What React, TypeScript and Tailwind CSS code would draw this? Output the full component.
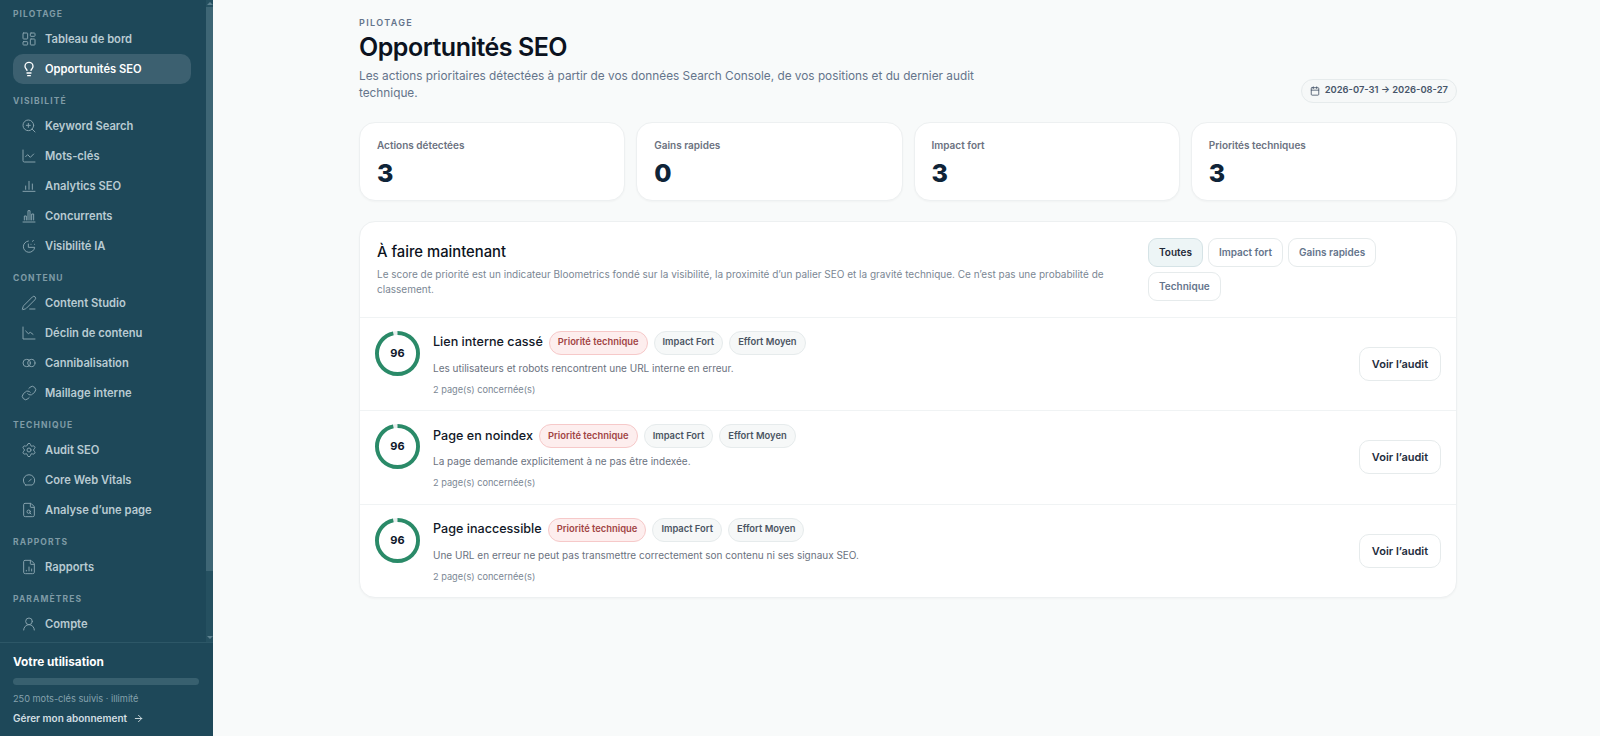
import {
  ArrowRight,
  Calendar,
  ChartLine,
  FileChartColumn,
  FileSearch,
  LayoutDashboard,
  Lightbulb,
  Link,
  PenLine,
  Settings,
  UserRound,
  ZoomIn,
} from 'lucide-react';
import type { ReactNode } from 'react';

function IconSvg({ children }: { children: ReactNode }) {
  return (
    <svg width="16" height="16" viewBox="0 0 24 24" fill="none" stroke="currentColor" strokeWidth="1.5" strokeLinecap="round" strokeLinejoin="round">
      {children}
    </svg>
  );
}

const barsIcon = (
  <IconSvg>
    <path d="M3 20h18M7 17v-5M12 17V5M17 17V9" />
  </IconSvg>
);

const competitorsIcon = (
  <IconSvg>
    <path d="M3 21h18M5 18v-6h3v6M10.5 18V4h3v14M16 18V9h3v9" />
  </IconSvg>
);

const aiIcon = (
  <IconSvg>
    <path d="M11 4.5a8.5 8.5 0 1 0 9.5 9.5H11V9" />
    <path d="M15 9.5h.01M17.5 5l1-1.5M20.5 9.5h.01" />
  </IconSvg>
);

const declineIcon = (
  <IconSvg>
    <path d="M3 3v18h18" />
    <path d="M7 9l4 4 3-2 4 3" />
  </IconSvg>
);

const circlesIcon = (
  <IconSvg>
    <circle cx="8.5" cy="12" r="5.5" />
    <circle cx="15.5" cy="12" r="5.5" />
  </IconSvg>
);

const vitalsIcon = (
  <IconSvg>
    <path d="M7 19.5h10a8.5 8.5 0 1 0-10 0z" />
    <path d="M12 14l3.5-3.5" />
  </IconSvg>
);

const sections = [
  {
    label: 'PILOTAGE',
    items: [
      { name: 'Tableau de bord', icon: <LayoutDashboard size={16} strokeWidth={1.5} /> },
      { name: 'Opportunités SEO', icon: <Lightbulb size={16} strokeWidth={2} />, active: true },
    ],
  },
  {
    label: 'VISIBILITÉ',
    items: [
      { name: 'Keyword Search', icon: <ZoomIn size={16} strokeWidth={1.5} /> },
      { name: 'Mots-clés', icon: <ChartLine size={16} strokeWidth={1.5} /> },
      { name: 'Analytics SEO', icon: barsIcon },
      { name: 'Concurrents', icon: competitorsIcon },
      { name: 'Visibilité IA', icon: aiIcon },
    ],
  },
  {
    label: 'CONTENU',
    items: [
      { name: 'Content Studio', icon: <PenLine size={16} strokeWidth={1.5} /> },
      { name: 'Déclin de contenu', icon: declineIcon },
      { name: 'Cannibalisation', icon: circlesIcon },
      { name: 'Maillage interne', icon: <Link size={16} strokeWidth={1.5} /> },
    ],
  },
  {
    label: 'TECHNIQUE',
    items: [
      { name: 'Audit SEO', icon: <Settings size={16} strokeWidth={1.5} /> },
      { name: 'Core Web Vitals', icon: vitalsIcon },
      { name: 'Analyse d’une page', icon: <FileSearch size={16} strokeWidth={1.5} /> },
    ],
  },
  {
    label: 'RAPPORTS',
    items: [{ name: 'Rapports', icon: <FileChartColumn size={16} strokeWidth={1.5} /> }],
  },
  {
    label: 'PARAMÈTRES',
    items: [{ name: 'Compte', icon: <UserRound size={16} strokeWidth={1.5} /> }],
  },
];

const stats = [
  { label: 'Actions détectées', value: '3' },
  { label: 'Gains rapides', value: '0' },
  { label: 'Impact fort', value: '3' },
  { label: 'Priorités techniques', value: '3' },
];

const opportunities = [
  { title: 'Lien interne cassé', text: 'Les utilisateurs et robots rencontrent une URL interne en erreur.' },
  { title: 'Page en noindex', text: 'La page demande explicitement à ne pas être indexée.' },
  { title: 'Page inaccessible', text: 'Une URL en erreur ne peut pas transmettre correctement son contenu ni ses signaux SEO.' },
];

function Sidebar() {
  return (
    <aside className="relative flex h-[736px] w-[213px] shrink-0 flex-col bg-[#1e4859]">
      <nav className="h-[642px] overflow-hidden pl-[13px] pr-[22px] pt-2">
        {sections.map((section, i) => (
          <div key={section.label} className={i > 0 ? 'mt-[11px]' : ''}>
            <div className="mb-[4px] flex h-[12px] items-center text-[8.5px] font-bold tracking-[0.13em] text-[#7f9ba6]">{section.label}</div>
            {section.items.map((item) => (
              <div
                key={item.name}
                className={`flex h-[30px] items-center gap-[8px] rounded-[10px] pl-[8px] text-[11.2px] font-semibold ${
                  item.active ? 'bg-[#3c6070] text-white' : 'text-[#b9cbd2]'
                }`}
              >
                <span className={`flex w-[16px] justify-center ${item.active ? 'text-white' : 'text-[#86a2ad]'}`}>{item.icon}</span>
                {item.name}
              </div>
            ))}
          </div>
        ))}
      </nav>
      <div className="absolute right-0 top-0 flex h-[642px] w-[7px] flex-col items-center bg-[#255060]">
        <div className="mt-[2px] h-0 w-0 border-x-[3px] border-b-[3px] border-x-transparent border-b-[#5f8290]" />
        <div className="mt-[2px] h-[564px] w-[7px] bg-[#3e6675]" />
        <div className="mt-auto mb-[3px] h-0 w-0 border-x-[3px] border-t-[3px] border-x-transparent border-t-[#5f8290]" />
      </div>
      <div className="border-t border-[#2d5767] px-[13px] pt-[11px]">
        <div className="text-[11.8px] font-bold text-white">Votre utilisation</div>
        <div className="mt-[6px] h-[7px] w-[186px] rounded-full bg-[#38606f]" />
        <div className="mt-[7px] text-[9.2px] text-[#86a2ad]">250 mots-clés suivis · illimité</div>
        <div className="mt-[6px] flex items-center gap-[6px] text-[10px] font-semibold text-[#d3dfe3]">
          Gérer mon abonnement <ArrowRight size={11} />
        </div>
      </div>
    </aside>
  );
}

function Ring() {
  return (
    <div className="relative h-[45px] w-[45px] shrink-0">
      <svg width="45" height="45" viewBox="0 0 46 46" className="-rotate-90">
        <circle cx="23" cy="23" r="21" fill="none" stroke="#e8eeee" strokeWidth="4" />
        <circle cx="23" cy="23" r="21" fill="none" stroke="#2a8a68" strokeWidth="4" strokeDasharray="126.7 132" />
      </svg>
      <div className="absolute inset-0 flex items-center justify-center text-[11px] font-bold text-[#0f172a]">96</div>
    </div>
  );
}

function Pill({ children, red }: { children: ReactNode; red?: boolean }) {
  return (
    <span
      className={`flex h-[24px] items-center rounded-full border px-[8px] text-[9.4px] font-semibold ${
        red ? 'border-[#f6c9c9] bg-[#fdeeee] text-[#a14545]' : 'border-[#e6ebec] bg-[#f6f8f8] text-[#4b5563]'
      }`}
    >
      {children}
    </span>
  );
}

function Filter({ children, active }: { children: ReactNode; active?: boolean }) {
  return (
    <span
      className={`flex h-[29px] items-center rounded-[9px] border px-[10px] text-[10px] font-semibold ${
        active ? 'border-[#d5e3e6] bg-[#edf5f6] text-[#1f2937]' : 'border-[#e6ebec] bg-white text-[#64748b]'
      }`}
    >
      {children}
    </span>
  );
}

export default function App() {
  return (
    <div className="flex h-[736px] w-[1600px] overflow-hidden bg-[#f8fafa] font-['Inter',sans-serif]">
      <Sidebar />
      <main className="flex-1 pl-[146px] pr-[143px] pt-[16px]">
        <div className="text-[9px] font-semibold tracking-[0.15em] text-[#64748b]">PILOTAGE</div>
        <h1 className="mt-[1px] text-[25px] font-semibold leading-[32px] tracking-[-0.02em] text-[#0b1220]">Opportunités SEO</h1>
        <div className="flex items-end justify-between">
          <p className="mt-[5px] w-[615px] text-[11.8px] leading-[17.5px] text-[#64748b]">
            Les actions prioritaires détectées à partir de vos données Search Console, de vos positions et du dernier audit technique.
          </p>
          <div className="flex h-[24px] items-center gap-[5px] rounded-full border border-[#e6ebec] bg-[#f6f8f8] px-[8px] text-[9.4px] font-semibold text-[#475569]">
            <Calendar size={10} />
            2026-07-31 → 2026-08-27
          </div>
        </div>

        <div className="mt-[19px] grid grid-cols-4 gap-[11px]">
          {stats.map((s) => (
            <div key={s.label} className="h-[79px] rounded-[16px] border border-[#edf0f1] bg-white px-[17px] pt-[15px] shadow-[0_1px_2px_rgba(15,23,42,0.03)]">
              <div className="text-[10px] font-semibold text-[#6b7280]">{s.label}</div>
              <div className="mt-[4px] text-[25px] font-extrabold leading-[32px] text-[#0f2438]">{s.value}</div>
            </div>
          ))}
        </div>

        <section className="mt-[20px] rounded-[16px] border border-[#edf0f1] bg-white shadow-[0_1px_2px_rgba(15,23,42,0.03)]">
          <div className="flex h-[95px] items-start justify-between px-[17px] pt-[16px]">
            <div className="w-[730px]">
              <h2 className="text-[14.8px] font-medium leading-[28px] text-[#0b1220]">À faire maintenant</h2>
              <p className="mt-[1px] text-[10px] leading-[15.5px] text-[#7b8794]">
                Le score de priorité est un indicateur Bloometrics fondé sur la visibilité, la proximité d’un palier SEO et la gravité technique. Ce n’est pas une probabilité de classement.
              </p>
            </div>
            <div className="flex w-[291px] flex-wrap gap-[5px]">
              <Filter active>Toutes</Filter>
              <Filter>Impact fort</Filter>
              <Filter>Gains rapides</Filter>
              <Filter>Technique</Filter>
            </div>
          </div>
          {opportunities.map((o) => (
            <div key={o.title} className="flex h-[93.5px] items-center border-t border-[#f0f3f4] pl-[15px] pr-[15px]">
              <div className="flex flex-1 items-start self-stretch pt-[13px]">
                <Ring />
                <div className="ml-[13px] flex-1">
                  <div className="flex items-center gap-[6px]">
                    <span className="text-[12.6px] font-medium text-[#111827]">{o.title}</span>
                    <Pill red>Priorité technique</Pill>
                    <Pill>Impact Fort</Pill>
                    <Pill>Effort Moyen</Pill>
                  </div>
                  <p className="mt-[6px] text-[10px] text-[#6b7280]">{o.text}</p>
                  <p className="mt-[7px] text-[9.2px] text-[#7b8794]">2 page(s) concernée(s)</p>
                </div>
              </div>
              <button className="flex h-[34px] w-[82px] items-center justify-center rounded-[10px] border border-[#e6ebec] bg-white text-[11px] font-semibold text-[#1f2d3d]">
                Voir l’audit
              </button>
            </div>
          ))}
        </section>
      </main>
    </div>
  );
}
